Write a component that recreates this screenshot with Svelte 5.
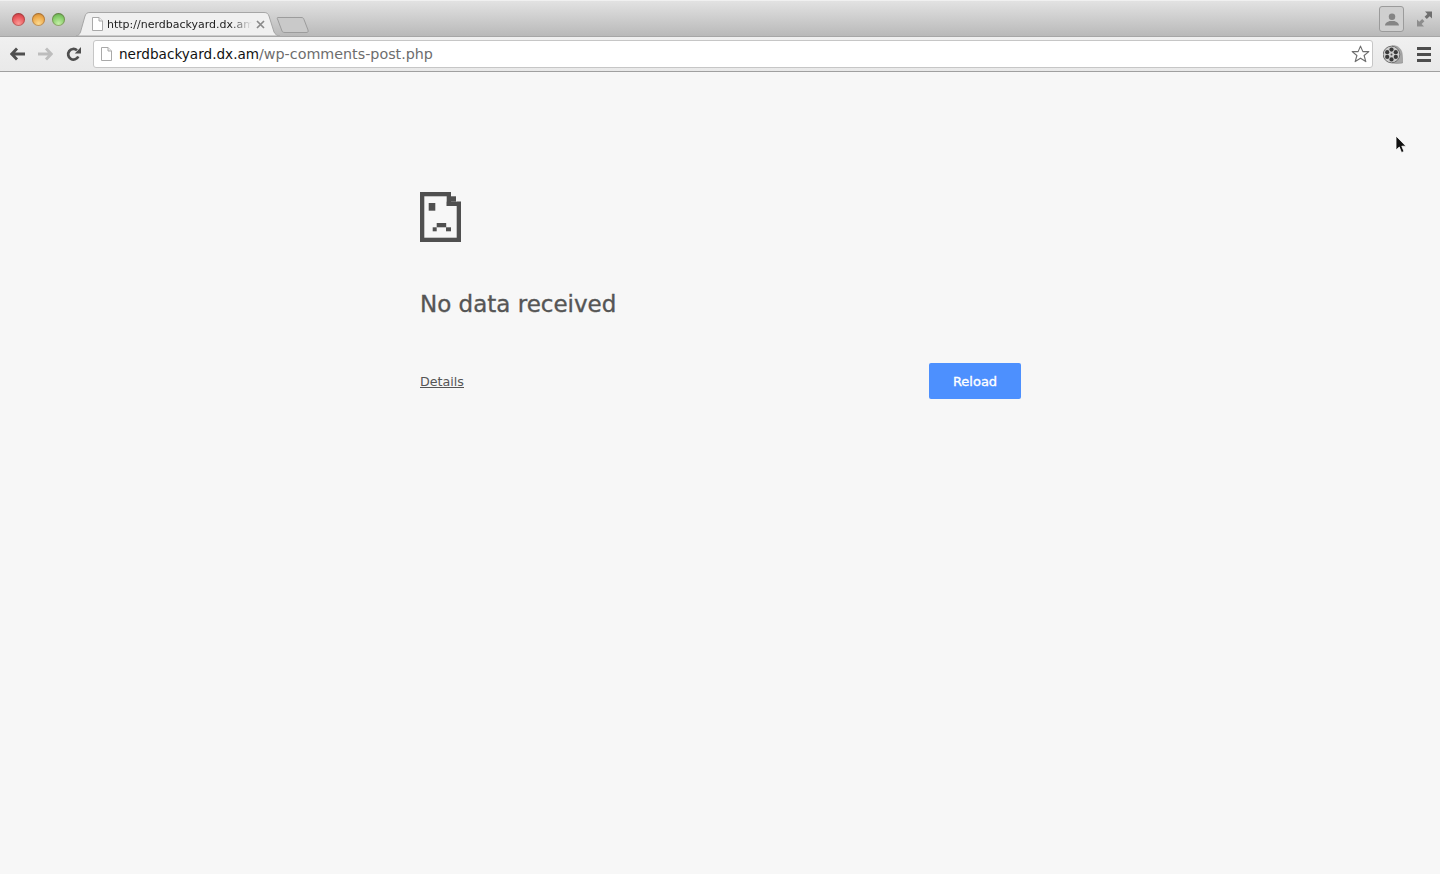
<script>
  const lights = [
    { name: 'close', light: '#fb9a96', mid: '#e8555a', dark: '#b5323a' },
    { name: 'minimize', light: '#fbd98f', mid: '#eda94a', dark: '#bd7c2a' },
    { name: 'zoom', light: '#c4eea6', mid: '#84cc68', dark: '#559a44' }
  ];

  // blocks of the sad page icon, in px from its top left corner
  const sadPage = [
    [0, 0, 31, 4.3],
    [0, 0, 4.3, 50],
    [0, 45.7, 41, 4.3],
    [36.7, 9.7, 4.3, 40.3],
    [26.7, 0, 4.3, 14],
    [26.7, 9.7, 14.3, 4.3],
    [31, 4.3, 5, 5.4],
    [8.7, 11, 6.6, 7.7],
    [16.7, 31, 9.5, 4.3],
    [12.7, 35.3, 4, 4],
    [26, 35.3, 5, 4]
  ];
</script>

{#snippet pageIcon()}
  <svg class="page-icon" width="11" height="14" viewBox="0 0 11 14">
    <path d="M.5 .5H7L10.500 4V13.500H.5Z" fill="#fff" stroke="#a9a9a9" />
    <path d="M7 .5V4H10.500" fill="#eee" stroke="#a9a9a9" />
  </svg>
{/snippet}

<div class="window">
  <header class="titlebar">
    <div class="lights">
      {#each lights as l}
        <span class="light" style="background: radial-gradient(circle at 50% 80%, {l.light}, {l.mid} 55%, {l.dark})"></span>
      {/each}
    </div>

    <div class="tab">
      <svg class="tab-shape" width="204" height="24" viewBox="0 0 204 24">
        <path d="M0 24C2.500 24 3.500 22 4.500 20L9 4C10 1.500 11 .5 14 .5H188C191 .5 192 1.500 193 4L198 20C199 22 201 24 204 24Z" fill="#f0f0f0" stroke="#a6a6a6" />
      </svg>
      {@render pageIcon()}
      <span class="tab-title">http://nerdbackyard.dx.am/wp-comments-post.php</span>
      <svg class="tab-close" width="9" height="9" viewBox="0 0 9 9">
        <path d="M1 1L8 8M8 1L1 8" stroke="#8a8a8a" stroke-width="1.700" />
      </svg>
    </div>

    <svg class="new-tab" width="35" height="18" viewBox="0 0 35 18">
      <path d="M2 1.500H25C27 1.500 27.500 2 28 3.500L32 14C32.500 16 32 16.500 30 16.500H9C7 16.500 6.500 16 6 15L1.500 3C1 2 1 1.500 2 1.500Z" fill="#c9c9c9" stroke="#9c9c9c" />
    </svg>

    <div class="title-right">
      <div class="avatar">
        <svg width="14" height="13" viewBox="0 0 15 14">
          <circle cx="7.500" cy="4" r="3.500" fill="#858585" />
          <path d="M0 13.500C0 10 3 9.500 5 8.500H10C12 9.500 15 10 15 13.500Z" fill="#858585" />
        </svg>
      </div>
      <svg class="fullscreen" width="15" height="16" viewBox="0 0 15 16">
        <path d="M8 .5H15V7.500L12.700 5.200L9.800 8L7.600 5.800L10.400 2.900Z" fill="#6f6f6f" />
        <path d="M7 15.500H0V8.500L2.300 10.800L5.200 8L7.400 10.200L4.600 13.100Z" fill="#8d8d8d" />
      </svg>
    </div>
  </header>

  <nav class="toolbar">
    <svg class="nav-btn" width="15" height="14" viewBox="0 0 15 14">
      <path d="M7 1.500L1.800 7L7 12.500M2 7H15" fill="none" stroke="#4f4f4f" stroke-width="2.800" />
    </svg>
    <svg class="nav-btn" width="15" height="14" viewBox="0 0 15 14">
      <path d="M8 1.500L13.200 7L8 12.500M13 7H0" fill="none" stroke="#bdbdbd" stroke-width="2.800" />
    </svg>
    <svg class="nav-btn" width="15" height="15" viewBox="0 0 15 15">
      <path d="M12.300 9.500A5.300 5.300 0 1 1 11 3.300" fill="none" stroke="#4f4f4f" stroke-width="2.700" />
      <path d="M8.800 6.500H15V0Z" fill="#4f4f4f" />
    </svg>

    <div class="omnibox">
      {@render pageIcon()}
      <span class="url"><span class="host">nerdbackyard.dx.am</span>/wp-comments-post.php</span>
      <svg class="star" width="19" height="18" viewBox="0 0 20 19">
        <path d="M10 1.200L12.500 7H18.800L13.800 11.100L15.600 17.500L10 13.900L4.400 17.500L6.200 11.100L1.200 7H7.500Z" fill="#fff" stroke="#6e6e6e" stroke-width="1.200" stroke-linejoin="round" />
      </svg>
    </div>

    <svg class="reel" width="20" height="19" viewBox="0 0 20 19">
      <path d="M9 .8C14 .3 18 3 19 8C19.600 11 19.400 15 19.500 18C16 18.500 12 18.500 9 18Z" fill="#a8a8a8" stroke="#8a8a8a" stroke-width=".6" />
      <circle cx="8.500" cy="9.500" r="8.300" fill="#cdcdcd" stroke="#6f6f6f" />
      <circle cx="8.500" cy="4.600" r="2.100" fill="#3a3a3a" />
      <circle cx="4.200" cy="7.200" r="2.100" fill="#3a3a3a" />
      <circle cx="4.200" cy="11.900" r="2.100" fill="#3a3a3a" />
      <circle cx="8.500" cy="14.400" r="2.100" fill="#3a3a3a" />
      <circle cx="12.800" cy="11.900" r="2.100" fill="#3a3a3a" />
      <circle cx="12.800" cy="7.200" r="2.100" fill="#3a3a3a" />
      <circle cx="8.500" cy="9.500" r="1" fill="#4f4f4f" />
    </svg>

    <div class="menu">
      <span></span><span></span><span></span>
    </div>
  </nav>

  <main class="page">
    <svg class="sad-page" width="41" height="50" viewBox="0 0 41 50">
      {#each sadPage as [x, y, w, h]}
        <rect {x} {y} width={w} height={h} fill="#505050" />
      {/each}
    </svg>
    <h1>No data received</h1>
    <div class="actions">
      <a href="#details">Details</a>
      <button>Reload</button>
    </div>
  </main>

  <svg class="cursor" width="12" height="19" viewBox="0 0 12 19">
    <path d="M1 1V15L4.300 12L6.500 17.500L9 16.500L6.800 11.200H11Z" fill="#111" stroke="#fff" stroke-width=".8" />
  </svg>
</div>

<style>
  :global(body) {
    margin: 0;
    background: #f7f7f7;
  }

  .window {
    position: relative;
    min-height: 874px;
    overflow: hidden;
    font-family: "DejaVu Sans", sans-serif;
  }

  .titlebar {
    display: flex;
    align-items: flex-end;
    height: 36px;
    box-sizing: border-box;
    background: linear-gradient(#e2e2e2, #b9b9b9);
    border-top: 1px solid #f0f0f0;
  }

  .lights {
    display: flex;
    gap: 7px;
    align-self: flex-start;
    padding: 12px 0 0 12px;
  }

  .light {
    width: 13px;
    height: 13px;
    border-radius: 50%;
    box-shadow: inset 0 0 0 1px rgba(90, 50, 40, 0.35);
  }

  .tab {
    position: relative;
    display: flex;
    align-items: center;
    width: 204px;
    height: 24px;
    box-sizing: border-box;
    margin-left: 11px;
    padding: 0 15px 0 16px;
    z-index: 1;
  }

  .tab-shape {
    position: absolute;
    left: 0;
    top: 0;
  }

  .page-icon {
    position: relative;
    flex: none;
  }

  .tab-title {
    position: relative;
    flex: 1;
    margin-left: 4px;
    overflow: hidden;
    white-space: nowrap;
    font-size: 11px;
    color: #222;
    -webkit-mask-image: linear-gradient(to right, #000 85%, transparent);
    mask-image: linear-gradient(to right, #000 85%, transparent);
  }

  .tab-close {
    position: relative;
    flex: none;
    margin: 0 0 0 4px;
  }

  .new-tab {
    margin: 0 0 2px -4px;
  }

  .title-right {
    display: flex;
    align-items: center;
    align-self: flex-start;
    gap: 13px;
    margin-left: auto;
    padding: 5px 8px 0 0;
  }

  .avatar {
    display: flex;
    align-items: flex-end;
    justify-content: center;
    width: 25px;
    height: 26px;
    box-sizing: border-box;
    padding-bottom: 5px;
    border: 1px solid #9b9b9b;
    border-radius: 3px;
    background: #cfcfcf;
  }

  .toolbar {
    display: flex;
    align-items: center;
    height: 36px;
    box-sizing: border-box;
    padding: 0 9px 0 10px;
    background: linear-gradient(#f0f0f0, #e9e9e9);
    border-top: 1px solid #a6a6a6;
    border-bottom: 1px solid #a0a0a0;
  }

  .nav-btn {
    flex: none;
    margin-right: 13px;
  }

  .omnibox {
    display: flex;
    align-items: center;
    flex: 1;
    height: 28px;
    box-sizing: border-box;
    margin-left: -1px;
    padding: 0 2px 0 7px;
    background: #fff;
    border: 1px solid #c6c6c6;
    border-radius: 3px;
  }

  .url {
    margin-left: 7px;
    font-size: 14.3px;
    color: #6d6d6d;
  }

  .host {
    font-size: 13.6px;
    color: #111;
  }

  .star {
    margin-left: auto;
  }

  .reel {
    flex: none;
    margin-left: 10px;
  }

  .menu {
    display: flex;
    flex-direction: column;
    gap: 3px;
    margin-left: 14px;
  }

  .menu span {
    width: 14px;
    height: 3px;
    background: #4d4d4d;
  }

  .page {
    width: 600px;
    margin: 0 auto;
    padding-top: 120px;
    color: #555;
  }

  .sad-page {
    display: block;
  }

  h1 {
    margin: 48px 0 0;
    font-size: 23px;
    line-height: 28px;
    font-weight: 400;
    color: #555;
    -webkit-text-stroke: 0.35px #555;
  }

  .actions {
    display: flex;
    align-items: center;
    justify-content: space-between;
    margin-top: 45px;
  }

  .actions a {
    font-size: 12.7px;
    color: #555;
  }

  .actions button {
    width: 92px;
    height: 36px;
    margin-right: -1px;
    border: 0;
    border-radius: 2px;
    background: #4d90fe;
    color: #fff;
    font: 400 13px "DejaVu Sans", sans-serif;
    -webkit-text-stroke: 0.35px #fff;
  }

  .cursor {
    position: absolute;
    left: 1395px;
    top: 135px;
  }
</style>
